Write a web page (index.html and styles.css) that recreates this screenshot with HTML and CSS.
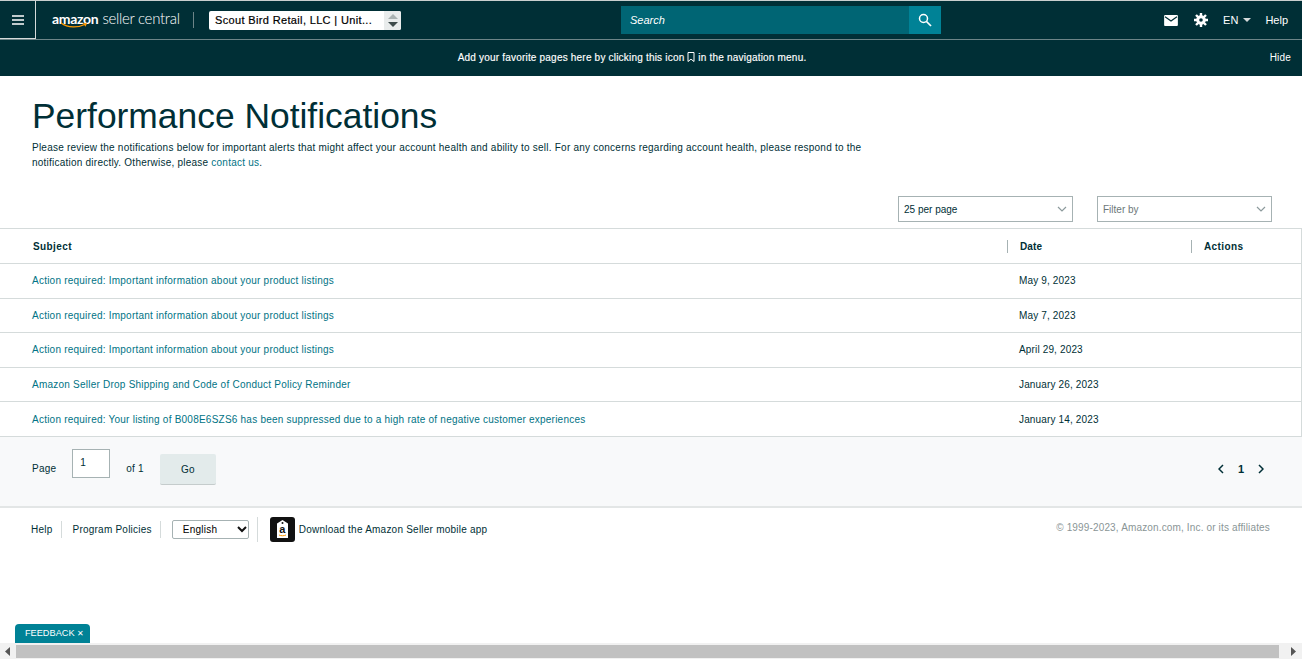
FILE: index.html
```html
<!DOCTYPE html>
<html lang="en">
<head>
    <meta charset="UTF-8">
    <title>Performance Notifications</title>
    <link rel="stylesheet" href="styles.css">
</head>
<body>
    <header class="nav">
        <div class="nav-left">
            <button class="menu-btn" aria-label="Menu">
                <svg width="14" height="12" viewBox="0 0 14 12"><path d="M1 2h12M1 6h12M1 10h12" stroke="#fff" stroke-width="1.6"/></svg>
            </button>
            <div class="logo">
                <span class="logo-amazon">amazon</span><span class="logo-seller">seller central</span>
                <svg class="logo-smile" width="28" height="7" viewBox="0 0 28 7"><path d="M1 1c7 5 17 5 25 1" fill="none" stroke="#f90" stroke-width="1.3"/><path d="M23 1l4 .3-1.5 3.4z" fill="#f90"/></svg>
            </div>
            <span class="nav-sep"></span>
            <div class="account">
                <span class="account-name">Scout Bird Retail, LLC | Unit...</span>
                <span class="account-arrows">
                    <svg width="10" height="13" viewBox="0 0 10 13"><path d="M5 0l5 5H0z" fill="#aab2b2"/><path d="M0 8h10l-5 5z" fill="#3d4a4a"/></svg>
                </span>
            </div>
        </div>
        <div class="search">
            <span class="search-text">Search</span>
            <span class="search-btn">
                <svg width="14" height="14" viewBox="0 0 14 14"><circle cx="5.5" cy="5.5" r="4" fill="none" stroke="#fff" stroke-width="1.5"/><path d="M8.5 8.5l4.5 4.5" stroke="#fff" stroke-width="1.7"/></svg>
            </span>
        </div>
        <div class="nav-right">
            <svg class="nav-mail" width="14" height="11" viewBox="0 0 15 12"><path d="M1 0h13a1 1 0 0 1 1 1v10a1 1 0 0 1-1 1H1a1 1 0 0 1-1-1V1a1 1 0 0 1 1-1z" fill="#fff"/><path d="M1 2l6.5 4.5L14 2" fill="none" stroke="#002f36" stroke-width="1.4"/></svg>
            <svg class="nav-gear" width="14" height="14" viewBox="0 0 14 14"><path d="M7 2.2a4.8 4.8 0 1 0 0 9.600a4.800 4.800 0 0 0 0-9.600zm0 3a1.800 1.800 0 1 1 0 3.600a1.800 1.800 0 0 1 0-3.600z" fill="#fff" fill-rule="evenodd"/><path d="M7 0v3M7 11v3M0 7h3M11 7h3M2 2l2 2M10 10l2 2M12 2l-2 2M4 10l-2 2" stroke="#fff" stroke-width="2.400"/></svg>
            <span class="nav-lang">EN<i class="caret"></i></span>
            <span class="nav-help">Help</span>
        </div>
    </header>
    <div class="favbar">
        <p class="favbar-msg">Add your favorite pages here by clicking this icon
            <svg width="8" height="10" viewBox="0 0 8 10"><path d="M1 .5h6v9L4 7.200 1 9.500z" fill="none" stroke="#fff"/></svg>
            in the navigation menu.</p>
        <span class="favbar-hide">Hide</span>
    </div>

    <main>
        <h1 class="title">Performance Notifications</h1>
        <p class="intro">Please review the notifications below for important alerts that might affect your account health and ability to sell. For any concerns regarding account health, please respond to the notification directly. Otherwise, please <a href="#">contact us</a>.</p>

        <div class="filters">
            <div class="select"><span>25 per page</span><svg width="10" height="6" viewBox="0 0 10 6"><path d="M1 1l4 4 4-4" fill="none" stroke="#8c9a9c" stroke-width="1.200"/></svg></div>
            <div class="select select-muted"><span>Filter by</span><svg width="10" height="6" viewBox="0 0 10 6"><path d="M1 1l4 4 4-4" fill="none" stroke="#8c9a9c" stroke-width="1.200"/></svg></div>
        </div>

        <div class="table">
            <div class="row row-head">
                <div class="cell-subject">Subject</div>
                <div class="cell-date"><span>Date</span></div>
                <div class="cell-actions"><span>Actions</span></div>
            </div>
            <div class="row">
                <div class="cell-subject"><a href="#">Action required: Important information about your product listings</a></div>
                <div class="cell-date">May 9, 2023</div>
                <div class="cell-actions"></div>
            </div>
            <div class="row">
                <div class="cell-subject"><a href="#">Action required: Important information about your product listings</a></div>
                <div class="cell-date">May 7, 2023</div>
                <div class="cell-actions"></div>
            </div>
            <div class="row">
                <div class="cell-subject"><a href="#">Action required: Important information about your product listings</a></div>
                <div class="cell-date">April 29, 2023</div>
                <div class="cell-actions"></div>
            </div>
            <div class="row">
                <div class="cell-subject"><a href="#">Amazon Seller Drop Shipping and Code of Conduct Policy Reminder</a></div>
                <div class="cell-date">January 26, 2023</div>
                <div class="cell-actions"></div>
            </div>
            <div class="row">
                <div class="cell-subject"><a href="#">Action required: Your listing of B008E6SZS6 has been suppressed due to a high rate of negative customer experiences</a></div>
                <div class="cell-date">January 14, 2023</div>
                <div class="cell-actions"></div>
            </div>
        </div>

        <div class="pager">
            <div class="pager-left">
                <span>Page</span>
                <div class="page-input">1</div>
                <span>of 1</span>
                <button class="go">Go</button>
            </div>
            <div class="pager-right">
                <svg width="6" height="10" viewBox="0 0 6 10"><path d="M5 1L1 5l4 4" fill="none" stroke="#002f36" stroke-width="1.500"/></svg>
                <b>1</b>
                <svg width="6" height="10" viewBox="0 0 6 10"><path d="M1 1l4 4-4 4" fill="none" stroke="#002f36" stroke-width="1.500"/></svg>
            </div>
        </div>

        <footer class="footer">
            <div class="footer-left">
                <span class="foot-link">Help</span>
                <span class="foot-link">Program Policies</span>
                <div class="foot-lang">
                    <span>English</span>
                    <svg width="10" height="7" viewBox="0 0 10 7"><path d="M1 1l4 4 4-4" fill="none" stroke="#111" stroke-width="2"/></svg>
                </div>
                <span class="foot-app">
                    <svg width="25" height="25" viewBox="0 0 25 25"><rect width="25" height="25" rx="3" fill="#111"/><path d="M7 6.500L12.500 3 18 6.500V21H7z" fill="#fff"/><circle cx="12.500" cy="6" r="1" fill="#111"/><text x="12.500" y="16" font-family="Liberation Sans" font-size="11" font-weight="bold" text-anchor="middle" fill="#111">a</text><path d="M9 18c2 1 5 1 7 0" fill="none" stroke="#f90" stroke-width="1"/></svg>
                    Download the Amazon Seller mobile app
                </span>
            </div>
            <span class="copyright">© 1999-2023, Amazon.com, Inc. or its affiliates</span>
        </footer>
    </main>

    <div class="feedback">FEEDBACK <span>✕</span></div>
    <div class="hscroll">
        <svg width="6" height="9" viewBox="0 0 6 9"><path d="M5 0v9L0 4.500z" fill="#555"/></svg>
        <div class="hscroll-thumb"></div>
        <svg width="6" height="9" viewBox="0 0 6 9"><path d="M0 0v9l5-4.500z" fill="#555"/></svg>
    </div>
</body>
</html>
```

FILE: styles.css
```css
* {
    box-sizing: border-box;
}

html, body {
    margin: 0;
    height: 100%;
    overflow: hidden;
}

body {
    font-family: "Liberation Sans", Arial, sans-serif;
    font-size: 10px;
    letter-spacing: 0.23px;
    color: #002f36;
    background: #fff;
}

a {
    color: #007385;
    text-decoration: none;
}

/* top nav */
.nav {
    height: 40px;
    background: #002f36;
    border-top: 1px solid #c9cfcf;
    border-bottom: 1px solid #6d8588;
    display: grid;
    grid-template-columns: 621px 320px 1fr;
    align-items: center;
    color: #fff;
}

.nav-left {
    display: flex;
    align-items: center;
    height: 100%;
}

.menu-btn {
    width: 36px;
    height: 38px;
    padding: 0;
    background: none;
    border: 1px solid #d5dbdb;
    border-top: none;
    border-left: none;
    display: flex;
    align-items: center;
    justify-content: center;
}

.logo {
    position: relative;
    margin-left: 16px;
    width: 128px;
    font-family: Lato, "Liberation Sans", sans-serif;
    font-size: 15px;
    white-space: nowrap;
    margin-top: -4px;
}

.logo-amazon {
    font-size: 14px;
    font-weight: 700;
    letter-spacing: -0.3px;
    margin-right: 4px;
}

.logo-seller {
    font-weight: 300;
    letter-spacing: -0.3px;
}

.logo-smile {
    position: absolute;
    left: 8px;
    top: 13px;
}

.nav-sep {
    width: 1px;
    height: 16px;
    background: #6d8588;
    margin: 0 15px 0 13px;
}

.account {
    width: 192px;
    height: 19px;
    background: #fff;
    border-radius: 2px;
    display: flex;
    align-items: center;
    color: #000;
    font-size: 11px;
    letter-spacing: 0.35px;
    padding-left: 6px;
}

.account-name {
    flex: 1;
    white-space: nowrap;
    -webkit-text-stroke: 0.2px #000;
}

.account-arrows {
    width: 17px;
    height: 100%;
    background: #e9ecec;
    border-radius: 0 2px 2px 0;
    display: flex;
    align-items: center;
    justify-content: center;
}

.search {
    height: 28px;
    background: #006574;
    display: flex;
    align-items: center;
    margin-top: -1px;
}

.search-text {
    flex: 1;
    padding-left: 9px;
    font-style: italic;
    font-size: 11px;
    letter-spacing: 0;
}

.search-btn {
    width: 32px;
    height: 100%;
    background: #008296;
    display: flex;
    align-items: center;
    justify-content: center;
}

.nav-right {
    display: flex;
    align-items: center;
    justify-content: flex-end;
    padding-right: 14px;
    font-size: 11px;
    letter-spacing: 0;
}

.nav-gear {
    margin-left: 16px;
}

.nav-lang {
    margin-left: 15px;
    display: flex;
    align-items: center;
}

.caret {
    margin-left: 5px;
    border: 4px solid transparent;
    border-top-color: #d5dbdb;
    border-bottom: none;
}

.nav-help {
    margin-left: 14px;
}

.favbar {
    height: 36px;
    background: #002f36;
    color: #fff;
    display: flex;
    align-items: center;
    justify-content: center;
    position: relative;
    padding-right: 38px;
    letter-spacing: 0.2px;
}

.favbar-msg {
    margin: -1px 0 0;
    -webkit-text-stroke: 0.15px #fff;
}

.favbar-msg svg {
    vertical-align: -1px;
}

.favbar-hide {
    position: absolute;
    right: 11px;
    top: 12px;
}

/* heading */
.title {
    margin: 20px 0 0 32px;
    font-size: 35.4px;
    font-weight: 400;
    line-height: 40px;
    letter-spacing: 0;
}

.intro {
    margin: 4px 0 0 32px;
    width: 840px;
    line-height: 15px;
}

/* filter dropdowns */
.filters {
    display: flex;
    justify-content: flex-end;
    gap: 24px;
    padding-right: 30px;
    margin-top: 26px;
    letter-spacing: 0;
}

.select {
    width: 175px;
    height: 26px;
    border: 1px solid #a6b2b3;
    display: flex;
    align-items: center;
    justify-content: space-between;
    padding: 0 5px;
}

.select-muted {
    color: #6c7778;
}

/* table */
.table {
    margin-top: 6px;
    border-top: 1px solid #d5dbdb;
    border-right: 1px solid #d5dbdb;
    border-bottom: 1px solid #d5dbdb;
}

.row {
    display: grid;
    grid-template-columns: 1019px 184px 1fr;
    align-items: center;
    height: 34.5px;
    border-bottom: 1px solid #d5dbdb;
}

.row:last-child {
    height: 34px;
    border-bottom: none;
}

.row-head {
    height: 35px;
    font-weight: 700;
    letter-spacing: 0.4px;
}

.cell-subject {
    padding-left: 32px;
}

.cell-date {
    letter-spacing: 0.15px;
}

.row-head .cell-subject {
    padding-left: 33px;
}

.row-head .cell-date,
.row-head .cell-actions {
    border-left: 1px solid #a6b2b3;
    margin-left: -12px;
    padding-left: 12px;
    line-height: 13px;
}

/* pagination */
.pager {
    height: 71px;
    background: #f8f9fa;
    border-bottom: 2px solid #e3e6e6;
    display: flex;
    justify-content: space-between;
    align-items: center;
    padding: 0 38px 6px 32px;
}

.pager-left {
    display: flex;
    align-items: center;
}

.page-input {
    width: 38px;
    height: 29px;
    margin: -3px 16px 7px;
    background: #fff;
    border: 1px solid #a6b2b3;
    padding: 7px 0 0 7px;
}

.go {
    width: 56px;
    height: 31px;
    margin: 2px 0 0 16px;
    background: #e3ebeb;
    border: none;
    border-bottom: 1px solid #c5cccc;
    border-radius: 2px;
    color: #002f36;
    font: inherit;
    letter-spacing: inherit;
}

.pager-right {
    display: flex;
    align-items: center;
    gap: 14px;
    font-size: 11px;
    letter-spacing: 0;
}

/* footer */
.footer {
    display: flex;
    justify-content: space-between;
    align-items: center;
    padding: 9px 32px 0 31px;
}

.footer-left {
    display: flex;
    align-items: center;
}

.foot-link {
    padding-right: 8px;
    margin-right: 11px;
    border-right: 1px solid #d5dbdb;
    line-height: 17px;
}

.foot-lang {
    width: 77px;
    height: 19px;
    border: 1px solid #a6b2b3;
    border-radius: 2px;
    display: flex;
    align-items: center;
    justify-content: space-between;
    padding: 0 1px 0 10px;
    margin-right: 8px;
    color: #000;
}

.foot-app {
    display: flex;
    align-items: center;
    gap: 4px;
    padding-left: 12px;
    border-left: 1px solid #d5dbdb;
}

.copyright {
    color: #8a9596;
    margin-top: -4px;
    letter-spacing: 0.15px;
}

/* overlays at bottom of window */
.feedback {
    position: fixed;
    left: 15px;
    bottom: 17px;
    width: 75px;
    height: 19px;
    padding: 4px 0 0 10px;
    background: #008296;
    color: #fff;
    border-radius: 4px 4px 0 0;
    font-size: 9.2px;
    letter-spacing: 0;
    white-space: nowrap;
}

.feedback span {
    font-size: 8px;
}

.hscroll {
    position: fixed;
    left: 0;
    right: 0;
    bottom: 1px;
    height: 16px;
    background: #f1f1f1;
    display: flex;
    align-items: center;
    padding: 0 5px;
    gap: 5px;
}

.hscroll-thumb {
    flex: 1;
    height: 13px;
    background: #c1c1c1;
    margin-right: 7px;
}
```
